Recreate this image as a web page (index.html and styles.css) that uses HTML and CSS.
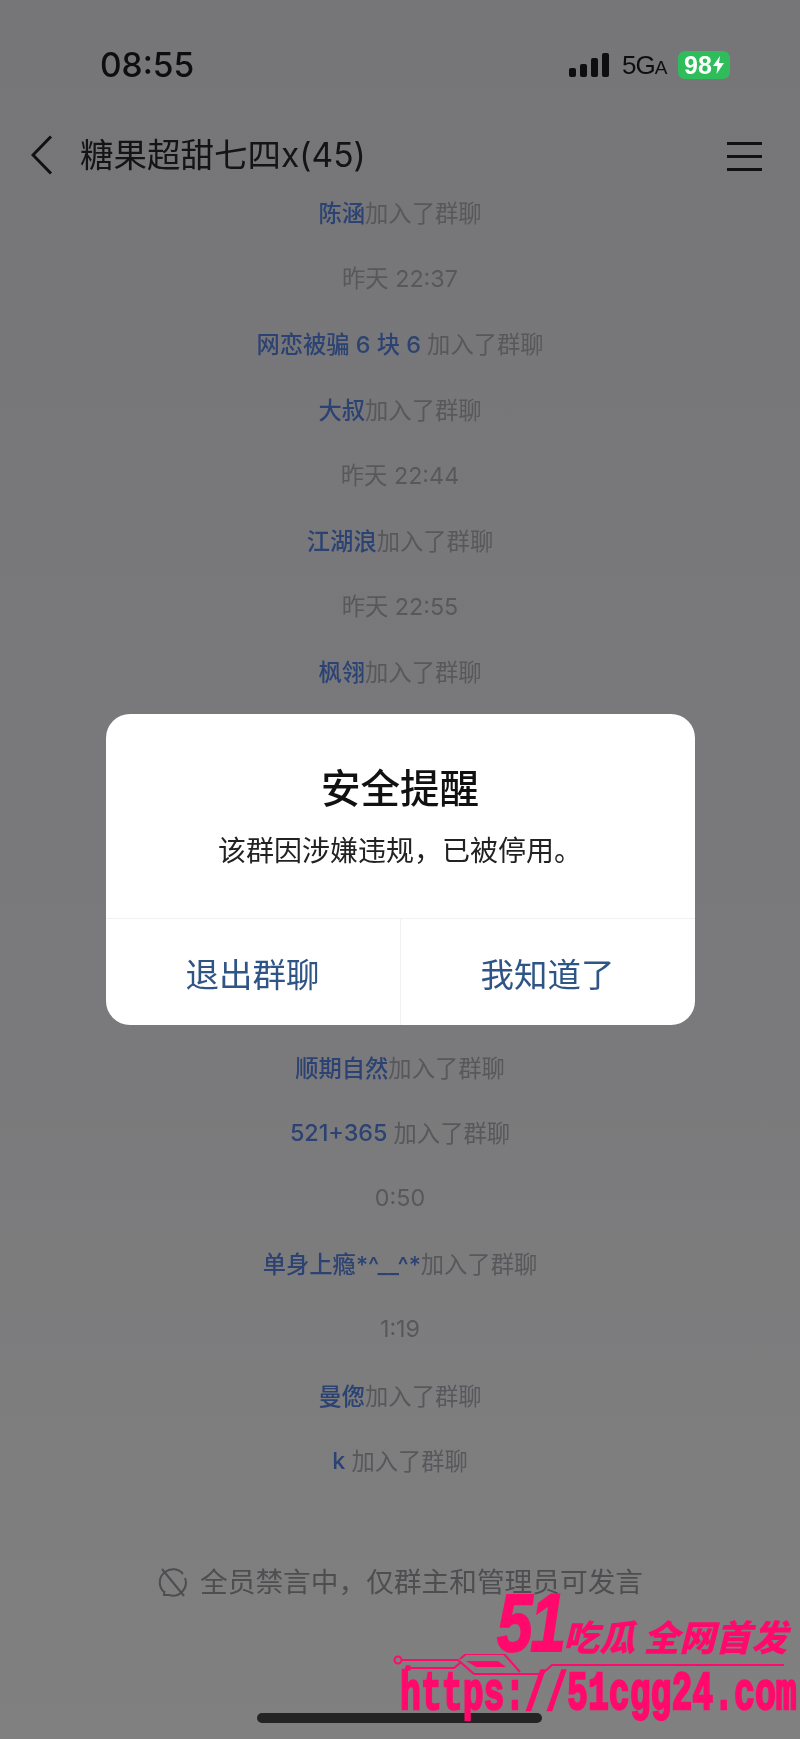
FILE: index.html
```html
<!DOCTYPE html>
<html lang="zh-CN">
<head>
    <meta charset="UTF-8">
    <meta name="viewport" content="width=device-width, initial-scale=1.0">
    <title>糖果超甜七四x(45)</title>
    <link rel="stylesheet" href="styles.css">
</head>
<body>
    <div class="screen">
        <div class="status-bar">
            <span class="time">08:55</span>
            <div class="status-icons">
                <svg class="signal" width="40" height="24" viewBox="0 0 40 24">
                    <rect x="0" y="15" width="7" height="9" rx="2"/>
                    <rect x="11" y="11" width="7" height="13" rx="2"/>
                    <rect x="22" y="5" width="7" height="19" rx="2"/>
                    <rect x="33" y="0" width="7" height="24" rx="2"/>
                </svg>
                <span class="network">5G<small>A</small></span>
                <div class="battery">
                    <span>98</span>
                    <svg width="11" height="18" viewBox="0 0 11 18"><path d="M7 0 L0 10 H4.5 L3.5 18 L11 7 H6 Z" fill="#fff"/></svg>
                </div>
            </div>
        </div>

        <div class="nav-bar">
            <svg class="back" width="22" height="40" viewBox="0 0 22 40"><path d="M20 1.5 L2 20 L20 38.5" fill="none" stroke="#111" stroke-width="3"/></svg>
            <span class="nav-title">糖果超甜七四x(45)</span>
            <div class="menu"><i></i><i></i><i></i></div>
        </div>

        <div class="chat">
            <div class="row"><b>陈涵</b>加入了群聊</div>
            <div class="row">昨天 22:37</div>
            <div class="row"><b>网恋被骗 6 块 6 </b>加入了群聊</div>
            <div class="row"><b>大叔</b>加入了群聊</div>
            <div class="row">昨天 22:44</div>
            <div class="row"><b>江湖浪</b>加入了群聊</div>
            <div class="row">昨天 22:55</div>
            <div class="row"><b>枫翎</b>加入了群聊</div>
            <div class="covered"></div>
            <div class="row"><b>顺期自然</b>加入了群聊</div>
            <div class="row"><b>521+365 </b>加入了群聊</div>
            <div class="row">0:50</div>
            <div class="row"><b>单身上瘾*^__^*</b>加入了群聊</div>
            <div class="row">1:19</div>
            <div class="row"><b>曼偬</b>加入了群聊</div>
            <div class="row"><b>k </b>加入了群聊</div>
        </div>

        <div class="muted-note">
            <svg width="30" height="30" viewBox="0 0 30 30" fill="none" stroke="#4e4e50" stroke-width="2">
                <path d="M7 25 A13 13 0 0 1 8 5 A13 13 0 0 1 26 7"/>
                <path d="M28 11 A13 13 0 0 1 12 28 L7 28 L7.5 24"/>
                <path d="M5 2 L27 29"/>
            </svg>
            <span>全员禁言中，仅群主和管理员可发言</span>
        </div>

        <div class="home-bar"></div>

        <div class="dialog-wrap">
            <div class="dialog">
                <div class="dialog-body">
                    <h2>安全提醒</h2>
                    <p>该群因涉嫌违规，已被停用。</p>
                </div>
                <div class="dialog-btns">
                    <button>退出群聊</button>
                    <button>我知道了</button>
                </div>
            </div>
        </div>

        <div class="watermark">
            <div class="wm-top">
                <span class="wm-num">51</span>
                <span class="wm-slogan">吃瓜 全网首发</span>
            </div>
            <svg class="wm-circuit" width="400" height="26" viewBox="0 0 400 26" fill="none" stroke="#ff0a6c" stroke-width="2">
                <circle cx="6" cy="6" r="3.5"/>
                <path d="M10 6 H66 L82 20 H150 L160 11 H392"/>
                <path d="M16 14 H62 L68 9"/>
                <circle cx="16" cy="14" r="2" fill="#ff0a6c"/>
                <path d="M68 5 L74 0 H112 L128 18"/>
                <path d="M74 7 H106 L114 13 H84 Z" fill="#ff0a6c" stroke="none"/>
            </svg>
            <div class="wm-url">https://51cgg24.com</div>
        </div>
    </div>
</body>
</html>
```

FILE: styles.css
```css
* {
    box-sizing: border-box;
}

body {
    margin: 0;
    font-family: Inter, "Noto Sans CJK SC", sans-serif;
}

/* the reference is a soft phone photo, so everything gets a slight blur */
.screen {
    position: relative;
    width: 800px;
    height: 1739px;
    overflow: hidden;
    background: linear-gradient(#767678, #7a7a7c 60%, #808080);
    display: flex;
    flex-direction: column;
    filter: blur(0.4px);
}

.status-bar {
    height: 131px;
    padding: 50px 70px 0 100px;
    display: flex;
    justify-content: space-between;
    align-items: flex-start;
}

.time {
    font-size: 33.5px;
    font-weight: 500;
    line-height: 30px;
    color: #0e0e0f;
}

.status-icons {
    display: flex;
    align-items: center;
    height: 28px;
    margin-top: 1px;
}

.signal {
    fill: #0e0e0f;
    margin-right: 13px;
}

.network {
    font-family: "Liberation Sans", sans-serif;
    font-size: 26px;
    color: #0e0e0f;
    width: 56px;
    letter-spacing: -1px;
}

.network small {
    font-size: 19px;
}

.battery {
    width: 52px;
    height: 28px;
    border-radius: 7px;
    background: #2fbd5b;
    display: flex;
    align-items: center;
    justify-content: center;
    gap: 1px;
    color: #fff;
    font-family: "Liberation Sans", sans-serif;
    font-size: 25px;
    font-weight: 700;
}

.nav-bar {
    height: 48px;
    padding: 0 38px 0 31px;
    display: flex;
    align-items: center;
}

.back {
    flex: none;
    margin-right: 27px;
}

.nav-title {
    flex: 1;
    font-size: 33.5px;
    line-height: 44px;
    color: #141415;
}

.menu {
    width: 35px;
    margin-top: 2px;
    display: flex;
    flex-direction: column;
    gap: 10px;
}

.menu i {
    display: block;
    height: 3px;
    background: #111;
}

.chat {
    flex: 1;
}

.row {
    height: 65.6px;
    display: flex;
    align-items: center;
    justify-content: center;
    white-space: pre;
    font-size: 23.3px;
    color: #58585c;
}

.row b {
    font-weight: 500;
    color: #2b4272;
}

.covered {
    height: 330px;
}

.muted-note {
    position: absolute;
    left: 157px;
    top: 1565px;
    display: flex;
    align-items: center;
    gap: 13px;
    font-size: 27.7px;
    line-height: 34px;
    color: #4e4e50;
}

.home-bar {
    position: absolute;
    left: 257px;
    top: 1713px;
    width: 285px;
    height: 10px;
    border-radius: 5px;
    background: #242424;
}

.dialog-wrap {
    position: absolute;
    inset: 0;
    display: flex;
    align-items: center;
    justify-content: center;
}

.dialog {
    width: 589px;
    height: 311px;
    border-radius: 24px;
    background: #fff;
    display: flex;
    flex-direction: column;
}

.dialog-body {
    height: 205px;
    padding-top: 49px;
    text-align: center;
    border-bottom: 1px solid #f1f1f1;
}

.dialog-body h2 {
    margin: 0;
    font-size: 39.5px;
    font-weight: 500;
    line-height: 52px;
    color: #111;
}

.dialog-body p {
    margin: 17px 0 0;
    font-size: 28px;
    line-height: 38px;
    color: #222;
}

.dialog-btns {
    flex: 1;
    display: flex;
}

.dialog-btns button {
    flex: 1;
    border: none;
    background: none;
    padding: 0;
    font-family: inherit;
    font-size: 33.5px;
    color: #2f5486;
}

.dialog-btns button + button {
    border-left: 1px solid #f1f1f1;
}

/* site watermark in the bottom corner */
.watermark {
    position: absolute;
    left: 392px;
    top: 1592px;
    width: 404px;
    color: #ff0a6c;
}

.wm-top {
    display: flex;
    align-items: flex-end;
    height: 62px;
    padding-left: 105px;
}

.wm-num {
    width: 66px;
    flex: none;
    font-family: "Liberation Sans", sans-serif;
    font-size: 82px;
    font-weight: 700;
    font-style: italic;
    line-height: 62px;
    letter-spacing: -3px;
    -webkit-text-stroke: 2px #ff0a6c;
    transform: scaleX(0.78);
    transform-origin: left bottom;
}

.wm-slogan {
    font-family: "Noto Sans CJK SC", sans-serif;
    font-size: 36px;
    font-weight: 900;
    font-style: italic;
    line-height: 38px;
    white-space: pre;
}

.wm-circuit {
    display: block;
}

.wm-url {
    font-family: "Liberation Mono", monospace;
    font-size: 34.8px;
    font-weight: 700;
    line-height: 34px;
    margin: -11px 0 0 8px;
    white-space: nowrap;
    -webkit-text-stroke: 1.5px #ff0a6c;
    transform: scaleY(1.55);
    transform-origin: left top;
}
```
